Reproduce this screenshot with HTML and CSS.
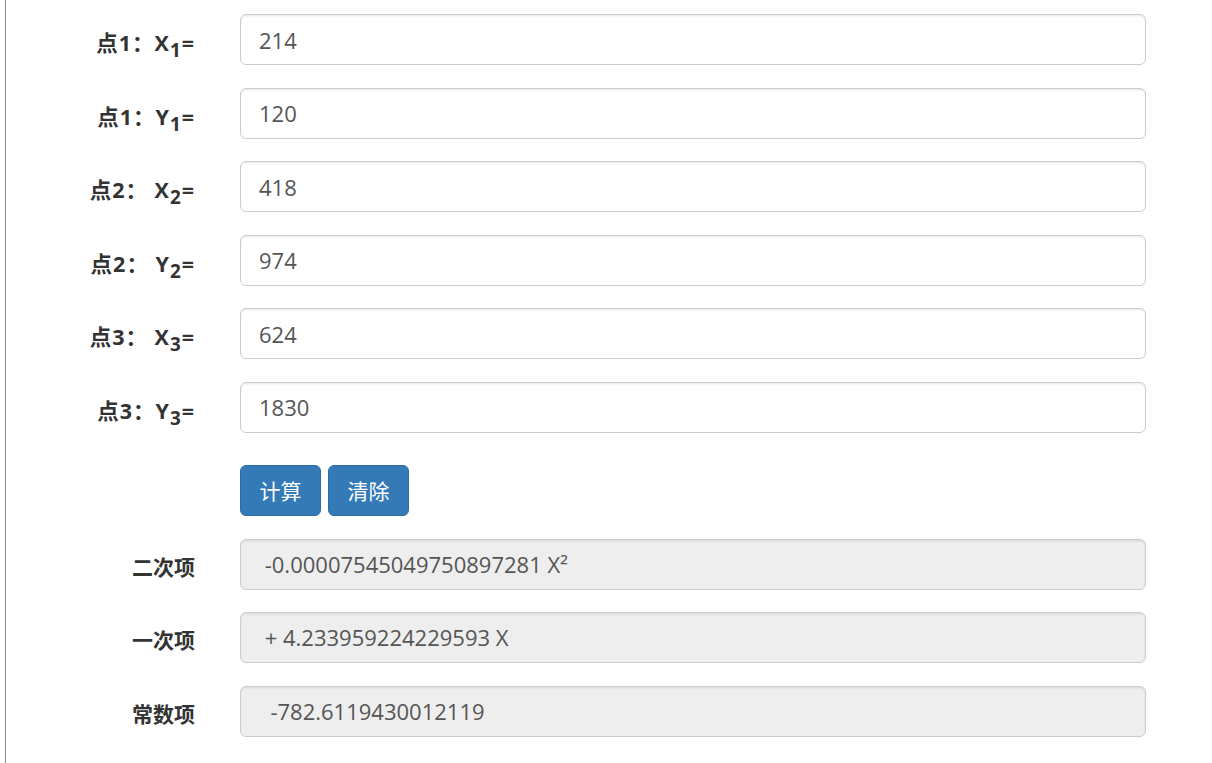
FILE: index.html
```html
<!DOCTYPE html>
<html lang="zh-CN">
<head>
<meta charset="utf-8">
<title>三点求二次函数</title>
<link rel="stylesheet" href="styles.css">
</head>
<body>
<div class="page">
  <form class="form">
    <div class="row">
      <label class="label label-point">点1：X<sub>1</sub>=</label>
      <input class="field" type="text" value="214">
    </div>
    <div class="row">
      <label class="label label-point">点1：Y<sub>1</sub>=</label>
      <input class="field" type="text" value="120">
    </div>
    <div class="row">
      <label class="label label-point">点2：&nbsp;X<sub>2</sub>=</label>
      <input class="field" type="text" value="418">
    </div>
    <div class="row">
      <label class="label label-point">点2：&nbsp;Y<sub>2</sub>=</label>
      <input class="field" type="text" value="974">
    </div>
    <div class="row">
      <label class="label label-point">点3：&nbsp;X<sub>3</sub>=</label>
      <input class="field" type="text" value="624">
    </div>
    <div class="row">
      <label class="label label-point">点3：Y<sub>3</sub>=</label>
      <input class="field" type="text" value="1830">
    </div>
    <div class="row row-buttons">
      <span class="label"></span>
      <div class="buttons">
        <button type="button" class="btn">计算</button>
        <button type="button" class="btn">清除</button>
      </div>
    </div>
    <div class="row">
      <label class="label label-plain">二次项</label>
      <div class="field output"> -0.00007545049750897281 X²</div>
    </div>
    <div class="row">
      <label class="label label-plain">一次项</label>
      <div class="field output"> + 4.233959224229593 X</div>
    </div>
    <div class="row">
      <label class="label label-plain">常数项</label>
      <div class="field output">  -782.6119430012119</div>
    </div>
  </form>
</div>
</body>
</html>
```
FILE: styles.css
```css
* { box-sizing: border-box; }
html, body { margin: 0; padding: 0; background: #fff; }
body {
  font-family: "Open Sans", "Noto Sans CJK SC", sans-serif;
  font-size: 21px;
  color: #333;
}
.page {
  margin-left: 5px;
  border-left: 1px solid #8c8c8c;
  min-height: 100vh;
  padding: 14px 0 0 19px;
}
.row {
  display: grid;
  grid-template-columns: 170px 906px;
  column-gap: 45px;
  margin-bottom: 22.5px;
}
.row-buttons { padding-top: 10px; }
.label {
  text-align: right;
  font-weight: bold;
  padding-top: 15px;
  line-height: 1.3;
  white-space: nowrap;
}
.label-point { letter-spacing: 1px; font-size: 21.5px; }
.label sub { font-size: 88%; line-height: 0; vertical-align: -0.3em; }
.label-plain { padding-top: 15px; }
.field {
  display: block;
  width: 906px;
  height: 51px;
  padding: 9px 18px;
  border: 1.5px solid #ccc;
  border-radius: 6px;
  background: #fff;
  box-shadow: inset 0 1.5px 1.5px rgba(0,0,0,.075);
  font-family: inherit;
  font-size: 22px;
  color: #555;
  line-height: 30px;
  outline: none;
}
.output {
  background: #eee;
  white-space: pre;
}
.buttons { display: flex; gap: 7px; }
.btn {
  height: 51px;
  padding: 9px 18.5px;
  font-family: inherit;
  font-size: 21px;
  line-height: 30px;
  color: #fff;
  background: #337ab7;
  border: 1.5px solid #2e6da4;
  border-radius: 6px;
  cursor: pointer;
}
```
